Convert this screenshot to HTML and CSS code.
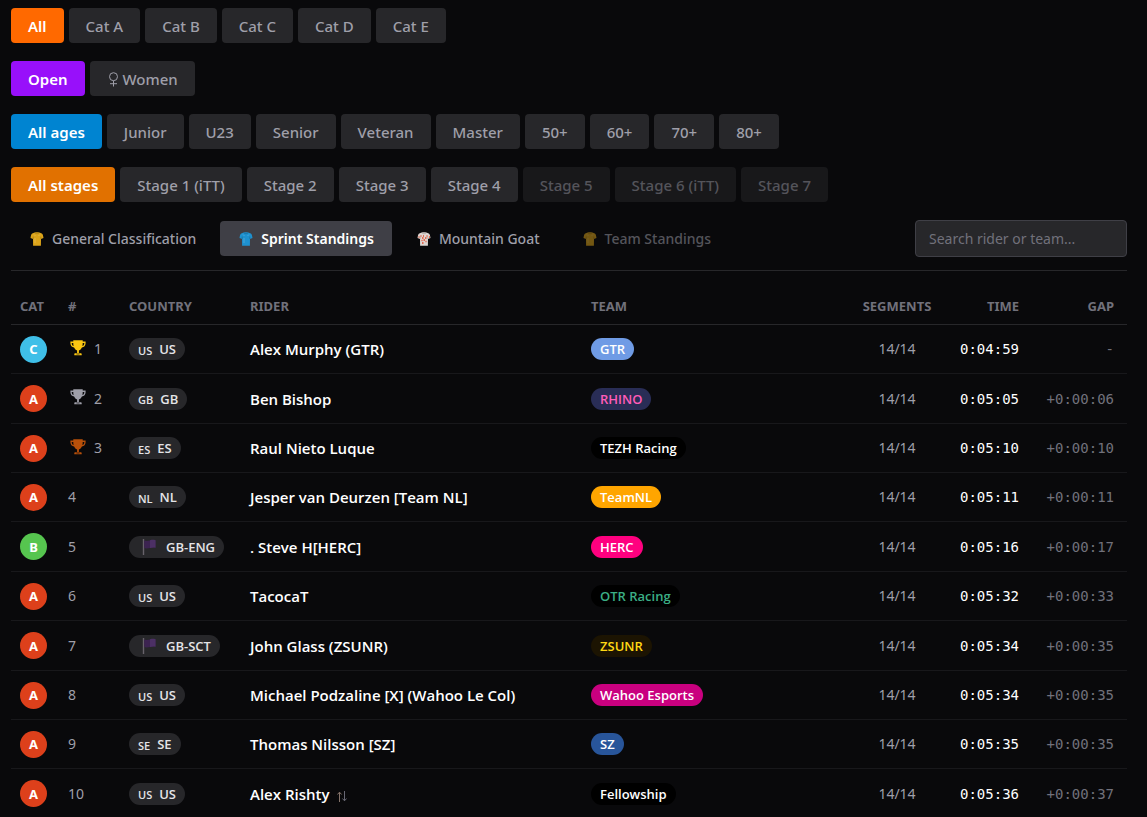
FILE: index.html
```
<!DOCTYPE html>
<html lang="en">
<head>
<meta charset="utf-8">
<title>Sprint Standings</title>
<link rel="stylesheet" href="styles.css">
</head>
<body>
<svg class="sprite" aria-hidden="true">
  <symbol id="jersey" viewBox="0 0 14 14">
    <path d="M4.600.6C5.200 0 8.800 0 9.400.6l2.400.9c.9.4 1.400 2.400 1.700 4.600l-2.500.8-.1 6.800H3.100L3 6.900.5 6.100C.8 3.900 1.300 1.900 2.200 1.500z" fill="currentColor"/>
    <path d="M5 .8C5.500 2 8.500 2 9 .8M3.200 4.500v2.400M10.800 4.500v2.400" fill="none" stroke="#000" stroke-opacity=".25" stroke-width=".7"/>
    <path d="M4 2.500l1.500 1.500M10 2.500L8.500 4M5 6v5" stroke="#fff" stroke-opacity=".2"/>
  </symbol>
  <symbol id="trophy" viewBox="0 0 16 16">
    <path d="M3.300.3h9.400v1.300h2.900v1.700c0 2.300-1.500 4-3.700 4.300-.7 1.600-1.700 2.500-3 2.900v2.700h1.700c.7 0 1.100.4 1.100 1v1H4.300v-1c0-.6.4-1 1.100-1h1.700v-2.700c-1.300-.4-2.300-1.300-3-2.900C1.900 7.300.4 5.600.4 3.300V1.600h2.900zM1.700 2.900v.4c0 1.300.7 2.400 1.900 2.800-.2-1-.3-2-.3-3.200zm12.600 0h-1.600c0 1.200-.1 2.200-.3 3.200 1.200-.4 1.900-1.500 1.900-2.800z" fill="currentColor"/>
    <path d="M6.500 14h3" stroke="#09090b" stroke-width=".7"/>
  </symbol>
  <symbol id="flag" viewBox="0 0 14 16">
    <path d="M1.500 0v16" stroke="#68636b" stroke-width="1.400"/>
    <path d="M2.200 1.500c4 1.300 7-1.200 11.300-.3v7.600c-4-1-7 1.400-11.300.3z" fill="#3c2351"/>
    <path d="M8 1.300c2-.5 3.500-.6 5.500-.1v7.600c-2-.6-3.500-.3-5.500.1z" fill="#4c3065"/>
  </symbol>
</svg>
<main class="page">
  <div class="filters">
    <div class="group">
      <button class="btn on orange">All</button><button class="btn">Cat A</button><button class="btn">Cat B</button><button class="btn">Cat C</button><button class="btn">Cat D</button><button class="btn">Cat E</button>
    </div>
    <div class="group">
      <button class="btn on purple">Open</button><button class="btn"><svg class="female" viewBox="0 0 9 15" aria-hidden="true"><path d="M4.500 8.700a4 4 0 1 1 0-8 4 4 0 0 1 0 8zv5.800M1 11.700h7" fill="none" stroke="currentColor"/></svg>Women</button>
    </div>
    <div class="group">
      <button class="btn on blue">All ages</button><button class="btn">Junior</button><button class="btn">U23</button><button class="btn">Senior</button><button class="btn">Veteran</button><button class="btn">Master</button><button class="btn">50+</button><button class="btn">60+</button><button class="btn">70+</button><button class="btn">80+</button>
    </div>
    <div class="group">
      <button class="btn on amber">All stages</button><button class="btn">Stage 1 (iTT)</button><button class="btn">Stage 2</button><button class="btn">Stage 3</button><button class="btn">Stage 4</button><button class="btn" disabled>Stage 5</button><button class="btn" disabled>Stage 6 (iTT)</button><button class="btn" disabled>Stage 7</button>
    </div>
  </div>
  <div class="toolbar">
    <nav class="tabs">
      <button class="tab"><svg class="jersey yellow"><use href="#jersey"/></svg>General Classification</button>
      <button class="tab current"><svg class="jersey azure"><use href="#jersey"/></svg>Sprint Standings</button>
      <button class="tab"><svg class="jersey white" viewBox="0 0 14 14"><use href="#jersey"/><path d="M3.500 4h1M6 4h1M9.500 4h1M5 6h1.500M8 6h1.500M4.500 8.500h1M6.500 8h1.500M8.500 9.500h1M5 11h1.500M1.500 5h1M12 5h1" stroke="#e0492c" stroke-width="1.300"/></svg>Mountain Goat</button>
      <button class="tab" disabled><svg class="jersey yellow"><use href="#jersey"/></svg>Team Standings</button>
    </nav>
    <input class="search" type="text" placeholder="Search rider or team..." aria-label="Search rider or team">
  </div>
  <table class="standings">
    <colgroup><col class="c-cat"><col class="c-rank"><col class="c-country"><col class="c-rider"><col><col class="c-seg"><col class="c-time"><col class="c-gap"></colgroup>
    <thead><tr><th>CAT</th><th>#</th><th>COUNTRY</th><th>RIDER</th><th>TEAM</th><th class="seg">SEGMENTS</th><th class="time">TIME</th><th class="gap">GAP</th></tr></thead>
    <tbody>
      <tr><td><span class="cat c">C</span></td><td><span class="rank"><svg class="trophy gold"><use href="#trophy"/></svg>1</span></td><td><span class="country"><small>US</small>US</span></td><td class="rider">Alex Murphy (GTR)</td><td><span class="team gtr">GTR</span></td><td class="seg">14/14</td><td class="time">0:04:59</td><td class="gap">-</td></tr>
      <tr><td><span class="cat">A</span></td><td><span class="rank"><svg class="trophy silver"><use href="#trophy"/></svg>2</span></td><td><span class="country"><small>GB</small>GB</span></td><td class="rider">Ben Bishop</td><td><span class="team rhino">RHINO</span></td><td class="seg">14/14</td><td class="time">0:05:05</td><td class="gap">+0:00:06</td></tr>
      <tr><td><span class="cat">A</span></td><td><span class="rank"><svg class="trophy bronze"><use href="#trophy"/></svg>3</span></td><td><span class="country"><small>ES</small>ES</span></td><td class="rider">Raul Nieto Luque</td><td><span class="team">TEZH Racing</span></td><td class="seg">14/14</td><td class="time">0:05:10</td><td class="gap">+0:00:10</td></tr>
      <tr><td><span class="cat">A</span></td><td><span class="rank">4</span></td><td><span class="country"><small>NL</small>NL</span></td><td class="rider">Jesper van Deurzen [Team NL]</td><td><span class="team teamnl">TeamNL</span></td><td class="seg">14/14</td><td class="time">0:05:11</td><td class="gap">+0:00:11</td></tr>
      <tr><td><span class="cat b">B</span></td><td><span class="rank">5</span></td><td><span class="country"><svg class="flag"><use href="#flag"/></svg>GB-ENG</span></td><td class="rider">. Steve H[HERC]</td><td><span class="team herc">HERC</span></td><td class="seg">14/14</td><td class="time">0:05:16</td><td class="gap">+0:00:17</td></tr>
      <tr><td><span class="cat">A</span></td><td><span class="rank">6</span></td><td><span class="country"><small>US</small>US</span></td><td class="rider">TacocaT</td><td><span class="team otr">OTR Racing</span></td><td class="seg">14/14</td><td class="time">0:05:32</td><td class="gap">+0:00:33</td></tr>
      <tr><td><span class="cat">A</span></td><td><span class="rank">7</span></td><td><span class="country"><svg class="flag"><use href="#flag"/></svg>GB-SCT</span></td><td class="rider">John Glass (ZSUNR)</td><td><span class="team zsunr">ZSUNR</span></td><td class="seg">14/14</td><td class="time">0:05:34</td><td class="gap">+0:00:35</td></tr>
      <tr><td><span class="cat">A</span></td><td><span class="rank">8</span></td><td><span class="country"><small>US</small>US</span></td><td class="rider">Michael Podzaline [X] (Wahoo Le Col)</td><td><span class="team wahoo">Wahoo Esports</span></td><td class="seg">14/14</td><td class="time">0:05:34</td><td class="gap">+0:00:35</td></tr>
      <tr><td><span class="cat">A</span></td><td><span class="rank">9</span></td><td><span class="country"><small>SE</small>SE</span></td><td class="rider">Thomas Nilsson [SZ]</td><td><span class="team sz">SZ</span></td><td class="seg">14/14</td><td class="time">0:05:35</td><td class="gap">+0:00:35</td></tr>
      <tr><td><span class="cat">A</span></td><td><span class="rank">10</span></td><td><span class="country"><small>US</small>US</span></td><td class="rider">Alex Rishty <svg class="swap" viewBox="0 0 10 11" aria-label="Changed category"><path d="M2.500 11V1.200M.4 3.500l2.100-2.300 2.100 2.300" fill="none" stroke="#85736a"/><path d="M7.500 0v9.800M5.400 7.500l2.100 2.300 2.100-2.300" fill="none" stroke="#686874"/></svg></td><td><span class="team">Fellowship</span></td><td class="seg">14/14</td><td class="time">0:05:36</td><td class="gap">+0:00:37</td></tr>
    </tbody>
  </table>
</main>
</body>
</html>
```
FILE: styles.css
```
* { box-sizing: border-box; }
body {
  margin: 0;
  background: #09090b;
  color: #9f9fa9;
  font: 14px/20px "Noto Sans", "Open Sans", sans-serif;
  overflow: hidden;
}
button, input { font: inherit; color: inherit; border: 0; }
.sprite { display: none; }
.page { padding: 8px 20px 0 11px; }

.filters { display: flex; flex-direction: column; gap: 18px; }
.group { display: flex; gap: 5px; }
.btn, .tab {
  display: flex;
  align-items: center;
  height: 35px;
  padding: 0 17px;
  border-radius: 4px;
  background: #27272a;
  font-size: 15px;
  font-weight: 500;
  white-space: nowrap;
}
.btn:disabled, .tab:disabled { opacity: .5; }
.on { color: #fff; font-weight: 600; }
.orange { background: #ff6900; }
.purple { background: #9810fa; }
.blue { background: #0084d1; }
.amber { background: #e17100; }
.female { width: 9px; height: 15px; margin: 2px 5px 0 2px; }

.toolbar {
  display: flex;
  align-items: flex-start;
  justify-content: space-between;
  margin-top: 18px;
  padding-bottom: 13px;
  border-bottom: 1px solid #27272a;
}
.tabs { display: flex; gap: 6px; padding-top: 1px; }
.tab { padding: 0 18px; background: none; font-size: 14px; }
.tab.current { background: #3f3f46; color: #fff; font-weight: 600; }
.jersey { width: 14px; height: 14px; margin: 0 8px 0 1px; }
.yellow { color: #dca41a; }
.azure { color: #1e91cf; }
.white { color: #ddd5d1; }
.search {
  width: 212px;
  height: 37px;
  padding: 0 13px;
  border: 1px solid #3f3f46;
  border-radius: 4px;
  background: #27272a;
}
.search::placeholder { color: #71717b; opacity: 1; }

.standings {
  width: 100%;
  margin-top: 17px;
  border-collapse: separate;
  border-spacing: 0;
  table-layout: fixed;
}
.c-cat { width: 48px; }
.c-rank { width: 61px; }
.c-country { width: 121px; }
.c-rider { width: 341px; }
.c-seg { width: 98px; }
.c-time { width: 86px; }
.c-gap { width: 95px; }
th, td { padding: 0 0 0 9px; text-align: left; white-space: nowrap; }
th {
  height: 37px;
  border-bottom: 1px solid #27272a;
  color: #71717b;
  font-size: 13px;
  font-weight: 700;
}
td { height: 49px; border-bottom: 1px solid #18181b; }
tr:nth-child(5n) td, tr:nth-child(5n+2) td { height: 50px; }
.seg { padding: 0 13px; text-align: center; }
.time, .gap { padding: 0 13px 0 0; text-align: right; }
td.time, td.gap { font-family: "DejaVu Sans Mono", monospace; }
td.time { color: #fff; }
td.gap { color: #71717b; }
.cat {
  display: flex;
  align-items: center;
  justify-content: center;
  width: 27px;
  height: 27px;
  border-radius: 50%;
  background: #dd401b;
  color: #fff;
  font-size: 13px;
  font-weight: 700;
}
.cat.b { background: #56c54f; }
.cat.c { background: #3fbfe8; }
.rank { display: flex; align-items: center; gap: 8px; }
.trophy { width: 16px; height: 16px; margin: 0 0 3px 2px; }
.gold { color: #fcc712; }
.silver { color: #9f9fa9; }
.bronze { color: #b8500a; }
.country, .team {
  display: inline-flex;
  align-items: center;
  height: 22px;
  padding: 0 9px;
  border-radius: 11px;
  background: #27272a;
  color: #e4e4e7;
  font-family: "Open Sans", "Noto Sans", sans-serif;
  font-size: 13px;
  font-weight: 600;
  vertical-align: middle;
}
.country small { margin: 3px 7px 0 0; font-size: 11px; }
.flag { width: 14px; height: 16px; margin: 0 10px 0 4px; }
.rider {
  color: #fff;
  font-family: "Open Sans", "Noto Sans", sans-serif;
  font-size: 15px;
  font-weight: 600;
}
.swap { width: 10px; height: 11px; margin-left: 4px; vertical-align: -2px; }
.team { background: #000; color: #fff; }
.gtr { background: #6f9be5; }
.rhino { background: #292d56; color: #ff5cb8; }
.teamnl { background: #ffa500; }
.herc { background: #ff007f; }
.otr { color: #3bae85; }
.zsunr { background: #1c1402; color: #ffd814; }
.wahoo { background: #c9007f; }
.sz { background: #28559a; }
```
